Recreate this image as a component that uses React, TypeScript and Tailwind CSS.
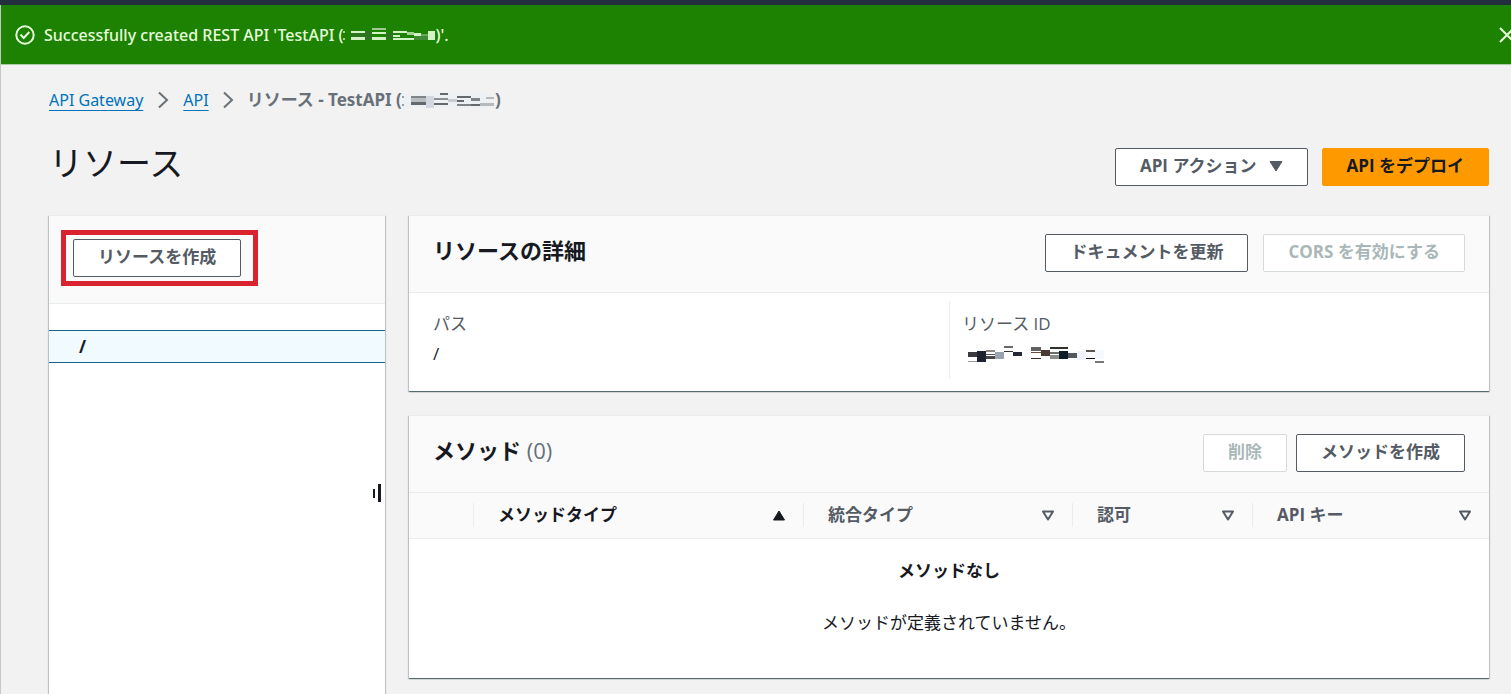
import React from 'react';
import clsx from 'clsx';

interface Block { x: number; y: number; w: number; h: number; c: string; }

// Pixelated stand-ins for the masked ids
const flashMask: Block[] = [
  { x: 0, y: 3, w: 2, h: 2, c: '#a5d396' }, { x: 0, y: 10, w: 2, h: 2, c: '#a5d396' },
  { x: 8, y: 3, w: 14, h: 2, c: '#d3f3c5' }, { x: 8, y: 5, w: 14, h: 5, c: '#2c7420' }, { x: 8, y: 9, w: 14, h: 3, c: '#d3f3c5' },
  { x: 22, y: 3, w: 7, h: 9, c: '#2c7420' }, { x: 29, y: 0, w: 14, h: 2, c: '#9cc98d' },
  { x: 29, y: 4, w: 14, h: 2, c: '#d3f3c5' }, { x: 29, y: 9, w: 14, h: 3, c: '#d3f3c5' }, { x: 43, y: 5, w: 7, h: 6, c: '#2c7420' },
  { x: 50, y: 3, w: 14, h: 2, c: '#d3f3c5' }, { x: 50, y: 7, w: 7, h: 2, c: '#d3f3c5' }, { x: 50, y: 10, w: 21, h: 2, c: '#d3f3c5' },
  { x: 64, y: 4, w: 7, h: 3, c: '#a5d396' }, { x: 71, y: 5, w: 7, h: 3, c: '#d3f3c5' }, { x: 71, y: 8, w: 14, h: 4, c: '#3f8a32' },
  { x: 78, y: 6, w: 7, h: 2, c: '#69a75a' }, { x: 85, y: 3, w: 7, h: 9, c: '#d3f3c5' },
];

const crumbMask: Block[] = [
  { x: 0, y: 3, w: 2, h: 2, c: '#9a9fa3' }, { x: 0, y: 11, w: 2, h: 2, c: '#9a9fa3' }, { x: 2, y: 0, w: 88, h: 15, c: '#eef1f4' },
  { x: 9, y: 3, w: 15, h: 2, c: '#7f8488' }, { x: 9, y: 5, w: 15, h: 4, c: '#b9bdc1' }, { x: 9, y: 9, w: 15, h: 3, c: '#65696d' },
  { x: 24, y: 3, w: 8, h: 12, c: '#d3d7df' }, { x: 38, y: 0, w: 8, h: 2, c: '#65696d' }, { x: 32, y: 5, w: 14, h: 2, c: '#8c9095' },
  { x: 32, y: 10, w: 14, h: 2, c: '#65696d' }, { x: 46, y: 6, w: 9, h: 3, c: '#c9cdd3' }, { x: 55, y: 3, w: 14, h: 2, c: '#65696d' },
  { x: 55, y: 7, w: 7, h: 2, c: '#65696d' }, { x: 55, y: 11, w: 14, h: 2, c: '#7f8488' }, { x: 69, y: 5, w: 9, h: 3, c: '#7f8488' },
  { x: 69, y: 11, w: 9, h: 2, c: '#65696d' }, { x: 84, y: 4, w: 8, h: 2, c: '#b5b9bd' }, { x: 78, y: 10, w: 14, h: 3, c: '#b5b9bd' },
];

const idMask: Block[] = [
  { x: 0, y: 6, w: 9, h: 5, c: '#3a3a3f' }, { x: 0, y: 15, w: 9, h: 1, c: '#999999' }, { x: 9, y: 5, w: 9, h: 11, c: '#1f2230' },
  { x: 18, y: 4, w: 9, h: 2, c: '#8f8785' }, { x: 18, y: 8, w: 9, h: 1, c: '#555555' }, { x: 18, y: 10, w: 9, h: 3, c: '#4b4748' },
  { x: 27, y: 6, w: 9, h: 7, c: '#9ba2b0' }, { x: 36, y: 0, w: 9, h: 2, c: '#6b6767' }, { x: 36, y: 5, w: 9, h: 1, c: '#333333' },
  { x: 45, y: 6, w: 9, h: 4, c: '#262838' }, { x: 63, y: 1, w: 10, h: 4, c: '#626262' }, { x: 63, y: 6, w: 10, h: 1, c: '#6b4b42' },
  { x: 63, y: 12, w: 10, h: 1, c: '#38302e' }, { x: 73, y: 4, w: 9, h: 6, c: '#4a3b36' }, { x: 82, y: 1, w: 18, h: 2, c: '#30302f' },
  { x: 82, y: 6, w: 9, h: 2, c: '#6c6e6b' }, { x: 82, y: 9, w: 9, h: 4, c: '#8b8d8a' }, { x: 91, y: 5, w: 9, h: 8, c: '#0d1c27' },
  { x: 100, y: 7, w: 9, h: 5, c: '#515860' }, { x: 109, y: 5, w: 9, h: 9, c: '#f0f4fa' }, { x: 118, y: 4, w: 9, h: 2, c: '#5a5553' },
  { x: 118, y: 12, w: 9, h: 1, c: '#111111' }, { x: 127, y: 4, w: 9, h: 9, c: '#f6f9fe' }, { x: 127, y: 15, w: 9, h: 2, c: '#77777a' },
];

function Mosaic({ blocks, width, height }: { blocks: Block[]; width: number; height: number }) {
  return (
    <svg width={width} height={height} className="shrink-0" shapeRendering="crispEdges" aria-hidden="true">
      {blocks.map((b, i) => <rect key={i} x={b.x} y={b.y} width={b.w} height={b.h} fill={b.c} />)}
    </svg>
  );
}

interface ButtonProps { children: React.ReactNode; variant?: 'normal' | 'primary'; disabled?: boolean; }

function Button({ children, variant = 'normal', disabled }: ButtonProps) {
  return (
    <button
      type="button"
      disabled={disabled}
      className={clsx(
        'flex h-[38px] items-center gap-3 whitespace-nowrap rounded-xs border px-6 pb-[2px] font-bold',
        variant === 'primary' && 'border-[#ff9900] bg-[#ff9900] text-[#16191f]',
        variant === 'normal' && !disabled && 'border-[#545b64] bg-white text-[#545b64] hover:bg-[#fafafa]',
        disabled && 'border-[#d5dbdb] bg-white text-[#aab7b8]',
      )}
    >
      {children}
    </button>
  );
}

function Chevron() {
  return (
    <svg width="12" height="18" viewBox="0 0 12 18" fill="none" stroke="#687078" strokeWidth="2" aria-hidden="true">
      <path d="M2 1.5 10 9 2 16.5" />
    </svg>
  );
}

function SortIcon({ active }: { active?: boolean }) {
  return (
    <svg width="12" height="11" viewBox="0 0 12 11" className="shrink-0" aria-hidden="true">
      {active
        ? <path d="M6 1 11.5 10H.5Z" fill="#16191f" stroke="#16191f" strokeLinejoin="round" />
        : <path d="M1 1.5h10L6 9.5Z" fill="none" stroke="#545b64" strokeWidth="2" strokeLinejoin="round" />}
    </svg>
  );
}

const columns = [
  { name: 'メソッドタイプ', width: 'w-[330px]', active: true },
  { name: '統合タイプ', width: 'w-[269px]' },
  { name: '認可', width: 'w-[180px]' },
  { name: 'API キー', width: '' },
];

const panel = 'border-t border-[#eaeded] bg-white shadow-[0_1px_1px_0_rgba(0,28,36,0.5),1px_1px_1px_0_rgba(0,28,36,0.15),-1px_1px_1px_0_rgba(0,28,36,0.15)]';

export default function App() {
  return (
    <div className="flex h-screen flex-col overflow-hidden bg-[#f2f2f2] font-['Open_Sans','Noto_Sans_CJK_JP',sans-serif] text-[17px] leading-6 text-[#16191f]">
      <div className="h-[5px] shrink-0 bg-[#232f3e]" />
      <div className="flex min-h-0 flex-1 flex-col border-l border-[#c3c8c8]">
        <div className="flex h-[60px] shrink-0 items-center overflow-hidden border-b border-[#a8cf9f] bg-[#1d8102] pl-[14px] text-[#e6ffdc]">
          <svg width="20" height="20" viewBox="0 0 20 20" fill="none" stroke="currentColor" strokeWidth="2" className="mr-[9px] shrink-0" aria-hidden="true">
            <circle cx="10" cy="10" r="8.7" />
            <path d="m5.5 9.5 3.2 3.5 5.6-6" />
          </svg>
          <p className="flex flex-1 items-center whitespace-nowrap font-['Noto_Sans',sans-serif] text-[16px] font-medium">
            Successfully created REST API 'TestAPI (<Mosaic blocks={flashMask} width={92} height={14} />)'.
          </p>
          <button type="button" aria-label="閉じる" className="-mr-1 shrink-0">
            <svg width="16" height="16" viewBox="0 0 16 16" fill="none" stroke="currentColor" strokeWidth="2" aria-hidden="true">
              <path d="m1 1 14 14M15 1 1 15" />
            </svg>
          </button>
        </div>

        <main className="flex min-h-0 flex-1 flex-col pl-12 pr-[22px]">
          <nav aria-label="パンくず" className="mt-[23px] flex items-center whitespace-nowrap font-['Noto_Sans','Noto_Sans_CJK_JP',sans-serif] text-[16px]">
            <a href="#gateway" className="text-[#0073bb] underline underline-offset-4">API Gateway</a>
            <span className="mx-[14px]"><Chevron /></span>
            <a href="#apis" className="text-[#0073bb] underline underline-offset-4">API</a>
            <span className="mx-[13px]"><Chevron /></span>
            <span className="flex items-center text-[17px] font-bold text-[#687078]">
              リソース - TestAPI (<Mosaic blocks={crumbMask} width={93} height={15} />)
            </span>
          </nav>

          <div className="mt-9 flex h-[38px] items-center justify-between">
            <h1 className="pb-2 text-[34px] leading-10">リソース</h1>
            <div className="flex gap-[14px]">
              <Button>
                API アクション
                <svg width="14" height="12" viewBox="0 0 14 12" aria-hidden="true"><path d="M1 1.5h12L7 11Z" fill="currentColor" stroke="currentColor" strokeLinejoin="round" /></svg>
              </Button>
              <Button variant="primary">API をデプロイ</Button>
            </div>
          </div>

          <div className="mt-[29px] flex min-h-0 flex-1 gap-6">
            <aside className={clsx('relative w-[336px] shrink-0', panel)}>
              <div className="flex h-[88px] items-start border-b border-[#eaeded] bg-[#fafafa] pl-3 pt-[14px]">
                <div className="border-[5px] border-[#d9232e] py-1 pl-[7px] pr-3">
                  <Button>リソースを作成</Button>
                </div>
              </div>
              <a href="#root" className="mt-[26px] flex h-[33px] items-center border-y border-[#16668a] bg-[#f1faff] pl-[30px] font-bold">/</a>
              <button type="button" aria-label="幅を変更" className="absolute right-1 top-[268px] flex cursor-col-resize items-center gap-[3px]">
                <span className="h-[9px] w-[2px] bg-[#16191f]" />
                <span className="h-[18px] w-[3px] bg-[#16191f]" />
              </button>
            </aside>

            <div className="flex min-w-0 flex-1 flex-col gap-6">
              <section className={panel}>
                <header className="flex h-[77px] items-center justify-between border-b border-[#eaeded] bg-[#fafafa] px-6 pb-[2px]">
                  <h2 className="pb-[6px] text-[22px] font-bold">リソースの詳細</h2>
                  <div className="flex gap-[15px]">
                    <Button>ドキュメントを更新</Button>
                    <Button disabled>CORS を有効にする</Button>
                  </div>
                </header>
                <dl className="grid grid-cols-2 pb-3 pt-2">
                  <div className="h-[78px] px-6 pt-[11px]">
                    <dt className="text-[#545b64]">パス</dt>
                    <dd className="mt-[6px]">/</dd>
                  </div>
                  <div className="h-[78px] border-l border-[#eaeded] px-3 pt-[11px]">
                    <dt className="text-[#545b64]">リソース ID</dt>
                    <dd className="mt-[6px] flex h-6 items-center pl-[6px]"><Mosaic blocks={idMask} width={136} height={17} /></dd>
                  </div>
                </dl>
              </section>

              <section className={panel}>
                <header className="flex h-[77px] items-center justify-between border-b border-[#eaeded] bg-[#fafafa] px-6 pb-[2px]">
                  <h2 className="pb-[6px] text-[22px] font-bold">メソッド <span className="font-normal text-[#687078]">(0)</span></h2>
                  <div className="flex gap-[9px]">
                    <Button disabled>削除</Button>
                    <Button>メソッドを作成</Button>
                  </div>
                </header>
                <table className="w-full table-fixed text-left">
                  <thead>
                    <tr className="h-[45px] border-b border-[#eaeded] bg-[#fafafa]">
                      <th scope="col" className="w-16 p-0" aria-label="選択" />
                      {columns.map((col) => (
                        <th key={col.name} scope="col" className={clsx('p-0', col.width)}>
                          <button type="button" className={clsx('flex w-full items-center justify-between whitespace-nowrap border-l border-[#eaeded] pl-6 pr-[18px] font-bold', col.active ? 'text-[#16191f]' : 'text-[#545b64]')}>
                            {col.name}<SortIcon active={col.active} />
                          </button>
                        </th>
                      ))}
                    </tr>
                  </thead>
                  <tbody>
                    <tr>
                      <td colSpan={5} className="pb-[43px] pt-5 text-center">
                        <p className="font-bold">メソッドなし</p>
                        <p className="mt-7">メソッドが定義されていません。</p>
                      </td>
                    </tr>
                  </tbody>
                </table>
              </section>
            </div>
          </div>
        </main>
      </div>
    </div>
  );
}
